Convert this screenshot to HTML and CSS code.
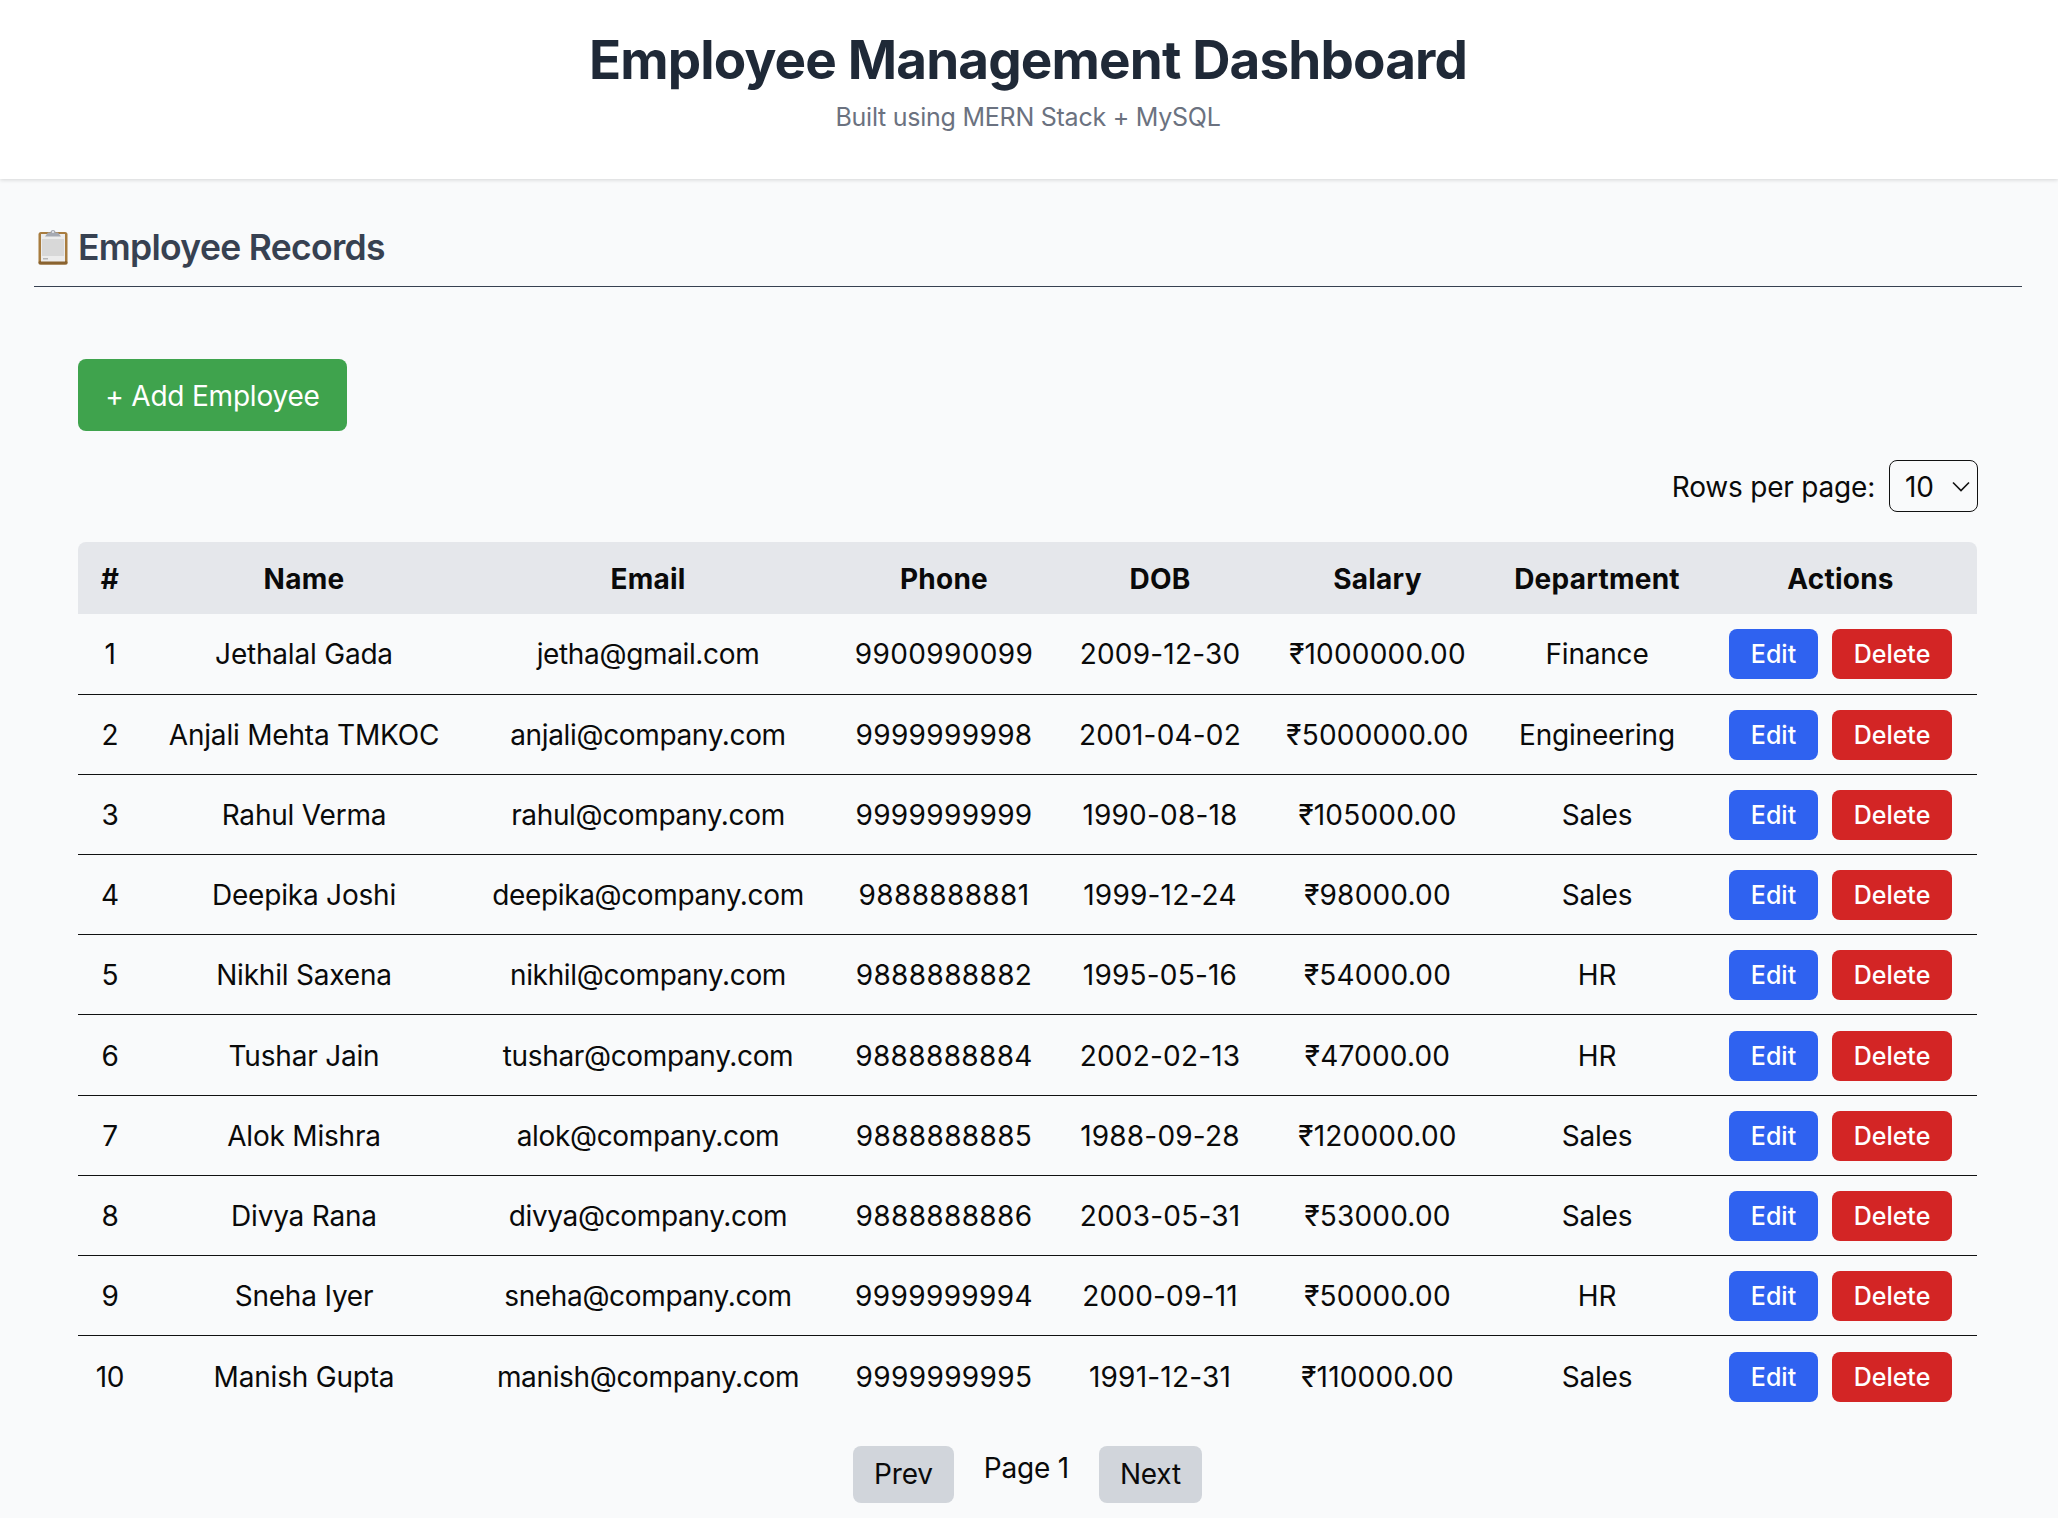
FILE: index.html
```html
<!DOCTYPE html>
<html lang="en">
<head>
    <meta charset="UTF-8">
    <meta name="viewport" content="width=device-width, initial-scale=1.0">
    <title>Employee Management Dashboard</title>
    <link rel="stylesheet" href="styles.css">
</head>
<body>
    <header class="top-header">
        <h1>Employee Management Dashboard</h1>
        <p>Built using MERN Stack + MySQL</p>
    </header>

    <main class="content">
        <h2 class="section-title">
            <svg class="clipboard-icon" viewBox="0 0 30 36" aria-hidden="true">
                <rect x="0.5" y="3" width="29" height="32.5" rx="2.5" fill="#a87c3f"/>
                <rect x="0.5" y="32" width="29" height="3.5" rx="1.5" fill="#8a6330"/>
                <rect x="3" y="5" width="24" height="27.5" fill="#ececec"/>
                <rect x="4" y="10" width="22" height="17" fill="#d8d8d8"/>
                <rect x="5" y="29" width="5" height="1.5" fill="#b5b5b5"/>
                <path d="M7 7.5 L10 3.5 H12.5 A2.5 2.5 0 0 1 17.5 3.5 H20 L23 7.5 Z" fill="#a5a9b2"/>
                <circle cx="15" cy="3" r="1" fill="#eceef0"/>
            </svg>
            Employee Records
        </h2>

        <section class="records">
            <button class="add-btn" type="button">+ Add Employee</button>

            <div class="rows-per-page">
                <label for="rowsSelect">Rows per page:</label>
                <div class="select-box" id="rowsSelect">
                    <span>10</span>
                    <svg class="chevron" viewBox="0 0 18 11" aria-hidden="true">
                        <path d="M1 1.5 L9 9.5 L17 1.5" fill="none" stroke="#111" stroke-width="1.6"/>
                    </svg>
                </div>
            </div>

            <table class="emp-table">
                <thead>
                    <tr>
                        <th class="col-num">#</th><th class="col-name">Name</th><th class="col-email">Email</th><th class="col-phone">Phone</th><th class="col-dob">DOB</th><th class="col-salary">Salary</th><th class="col-dept">Department</th><th class="col-actions">Actions</th>
                    </tr>
                </thead>
                <tbody>
                    <tr><td>1</td><td>Jethalal Gada</td><td class="email">jetha@gmail.com</td><td class="phone">9900990099</td><td class="digits">2009-12-30</td><td class="digits">₹1000000.00</td><td>Finance</td><td class="actions"><button class="edit-btn">Edit</button><button class="delete-btn">Delete</button></td></tr>
                    <tr><td>2</td><td>Anjali Mehta TMKOC</td><td class="email">anjali@company.com</td><td class="phone">9999999998</td><td class="digits">2001-04-02</td><td class="digits">₹5000000.00</td><td>Engineering</td><td class="actions"><button class="edit-btn">Edit</button><button class="delete-btn">Delete</button></td></tr>
                    <tr><td>3</td><td>Rahul Verma</td><td class="email">rahul@company.com</td><td class="phone">9999999999</td><td class="digits">1990-08-18</td><td class="digits">₹105000.00</td><td>Sales</td><td class="actions"><button class="edit-btn">Edit</button><button class="delete-btn">Delete</button></td></tr>
                    <tr><td>4</td><td>Deepika Joshi</td><td class="email">deepika@company.com</td><td class="phone">9888888881</td><td class="digits">1999-12-24</td><td class="digits">₹98000.00</td><td>Sales</td><td class="actions"><button class="edit-btn">Edit</button><button class="delete-btn">Delete</button></td></tr>
                    <tr><td>5</td><td>Nikhil Saxena</td><td class="email">nikhil@company.com</td><td class="phone">9888888882</td><td class="digits">1995-05-16</td><td class="digits">₹54000.00</td><td>HR</td><td class="actions"><button class="edit-btn">Edit</button><button class="delete-btn">Delete</button></td></tr>
                    <tr><td>6</td><td>Tushar Jain</td><td class="email">tushar@company.com</td><td class="phone">9888888884</td><td class="digits">2002-02-13</td><td class="digits">₹47000.00</td><td>HR</td><td class="actions"><button class="edit-btn">Edit</button><button class="delete-btn">Delete</button></td></tr>
                    <tr><td>7</td><td>Alok Mishra</td><td class="email">alok@company.com</td><td class="phone">9888888885</td><td class="digits">1988-09-28</td><td class="digits">₹120000.00</td><td>Sales</td><td class="actions"><button class="edit-btn">Edit</button><button class="delete-btn">Delete</button></td></tr>
                    <tr><td>8</td><td>Divya Rana</td><td class="email">divya@company.com</td><td class="phone">9888888886</td><td class="digits">2003-05-31</td><td class="digits">₹53000.00</td><td>Sales</td><td class="actions"><button class="edit-btn">Edit</button><button class="delete-btn">Delete</button></td></tr>
                    <tr><td>9</td><td>Sneha Iyer</td><td class="email">sneha@company.com</td><td class="phone">9999999994</td><td class="digits">2000-09-11</td><td class="digits">₹50000.00</td><td>HR</td><td class="actions"><button class="edit-btn">Edit</button><button class="delete-btn">Delete</button></td></tr>
                    <tr><td>10</td><td>Manish Gupta</td><td class="email">manish@company.com</td><td class="phone">9999999995</td><td class="digits">1991-12-31</td><td class="digits">₹110000.00</td><td>Sales</td><td class="actions"><button class="edit-btn">Edit</button><button class="delete-btn">Delete</button></td></tr>
                </tbody>
            </table>

            <div class="pagination">
                <button class="page-btn">Prev</button>
                <span class="page-label">Page 1</span>
                <button class="page-btn">Next</button>
            </div>
        </section>
    </main>
</body>
</html>
```

FILE: styles.css
```css
* {
    box-sizing: border-box;
}

body {
    margin: 0;
    background-color: #f9fafb;
    color: #0a0a0a;
    font-family: "Inter", "Liberation Sans", sans-serif;
    font-size: 28px;
    letter-spacing: -0.2px;
}

button {
    font-family: inherit;
    letter-spacing: inherit;
    border: none;
    cursor: pointer;
}

.top-header {
    height: 179px;
    padding: 28px 2px 0 0;
    background-color: white;
    text-align: center;
    box-shadow: 0 1px 4px rgba(0, 0, 0, 0.15);
}

.top-header h1 {
    margin: 0;
    font-size: 53px;
    line-height: 64px;
    font-weight: 700;
    letter-spacing: -0.86px;
    color: #1f2937;
}

.top-header p {
    margin: 7px 0 0;
    font-size: 25px;
    line-height: 36px;
    letter-spacing: -0.25px;
    color: #6b7280;
}

.content {
    padding: 0 36px 0 34px;
}

.section-title {
    display: flex;
    align-items: center;
    gap: 10px;
    margin: 0;
    padding: 46px 0 15px 4px;
    border-bottom: 1px solid #374151;
    font-size: 35.5px;
    line-height: 46px;
    font-weight: 600;
    letter-spacing: -0.7px;
    color: #374151;
}

.clipboard-icon {
    width: 30px;
    height: 36px;
    flex-shrink: 0;
    margin-top: -2px;
}

.records {
    padding: 72px 45px 0 44px;
}

.add-btn {
    display: block;
    width: 269px;
    height: 72px;
    padding-top: 2px;
    background-color: #3fa34d;
    color: white;
    font-size: 28px;
    border-radius: 8px;
}

.rows-per-page {
    display: flex;
    justify-content: flex-end;
    align-items: center;
    gap: 14px;
    margin: 29px -1px 0 0;
}

.rows-per-page label {
    padding-top: 2px;
}

.select-box {
    display: flex;
    align-items: center;
    justify-content: space-between;
    width: 89px;
    height: 52px;
    padding: 0 7px 0 15px;
    border: 1px solid #111;
    border-radius: 8px;
}

.select-box span {
    padding-top: 2px;
}

.chevron {
    width: 18px;
    height: 11px;
}

.emp-table {
    width: 100%;
    margin-top: 30px;
    border-collapse: collapse;
    table-layout: fixed;
}

.emp-table th {
    height: 72px;
    padding: 2px 0 0;
    background-color: #e5e7eb;
    font-weight: 700;
    letter-spacing: 0.25px;
    text-align: center;
}

.emp-table th:first-child {
    border-top-left-radius: 8px;
}

.emp-table th:last-child {
    border-top-right-radius: 8px;
}

.col-num { width: 64px; }
.col-name { width: 324px; }
.col-email { width: 364px; }
.col-phone { width: 228px; }
.col-dob { width: 204px; }
.col-salary { width: 231px; }
.col-dept { width: 208px; }
.col-actions { width: 276px; }

.emp-table td {
    height: 80.2px;
    padding: 1px 0 0;
    text-align: center;
    white-space: nowrap;
    border-bottom: 1px solid #111;
}

.emp-table td.email {
    letter-spacing: -0.35px;
}

.emp-table td.phone {
    letter-spacing: 0.35px;
}

.emp-table td.digits {
    letter-spacing: 0.2px;
}

.emp-table th.col-actions,
.emp-table td.actions {
    padding-left: 3px;
}

.emp-table tbody tr:last-child td {
    border-bottom: none;
}

.edit-btn,
.delete-btn {
    height: 50px;
    color: white;
    font-size: 25px;
    font-weight: 500;
    letter-spacing: 0;
    border-radius: 8px;
}

.edit-btn {
    width: 89px;
    margin-right: 14px;
    background-color: #2f62f0;
}

.delete-btn {
    width: 120px;
    background-color: #d32525;
}

.pagination {
    display: flex;
    justify-content: center;
    gap: 30px;
    margin-top: 30px;
}

.page-btn {
    height: 57px;
    padding: 0 21px;
    background-color: #d1d5db;
    color: #0a0a0a;
    font-size: 28px;
    border-radius: 8px;
}

.page-label {
    line-height: 44px;
}
```
